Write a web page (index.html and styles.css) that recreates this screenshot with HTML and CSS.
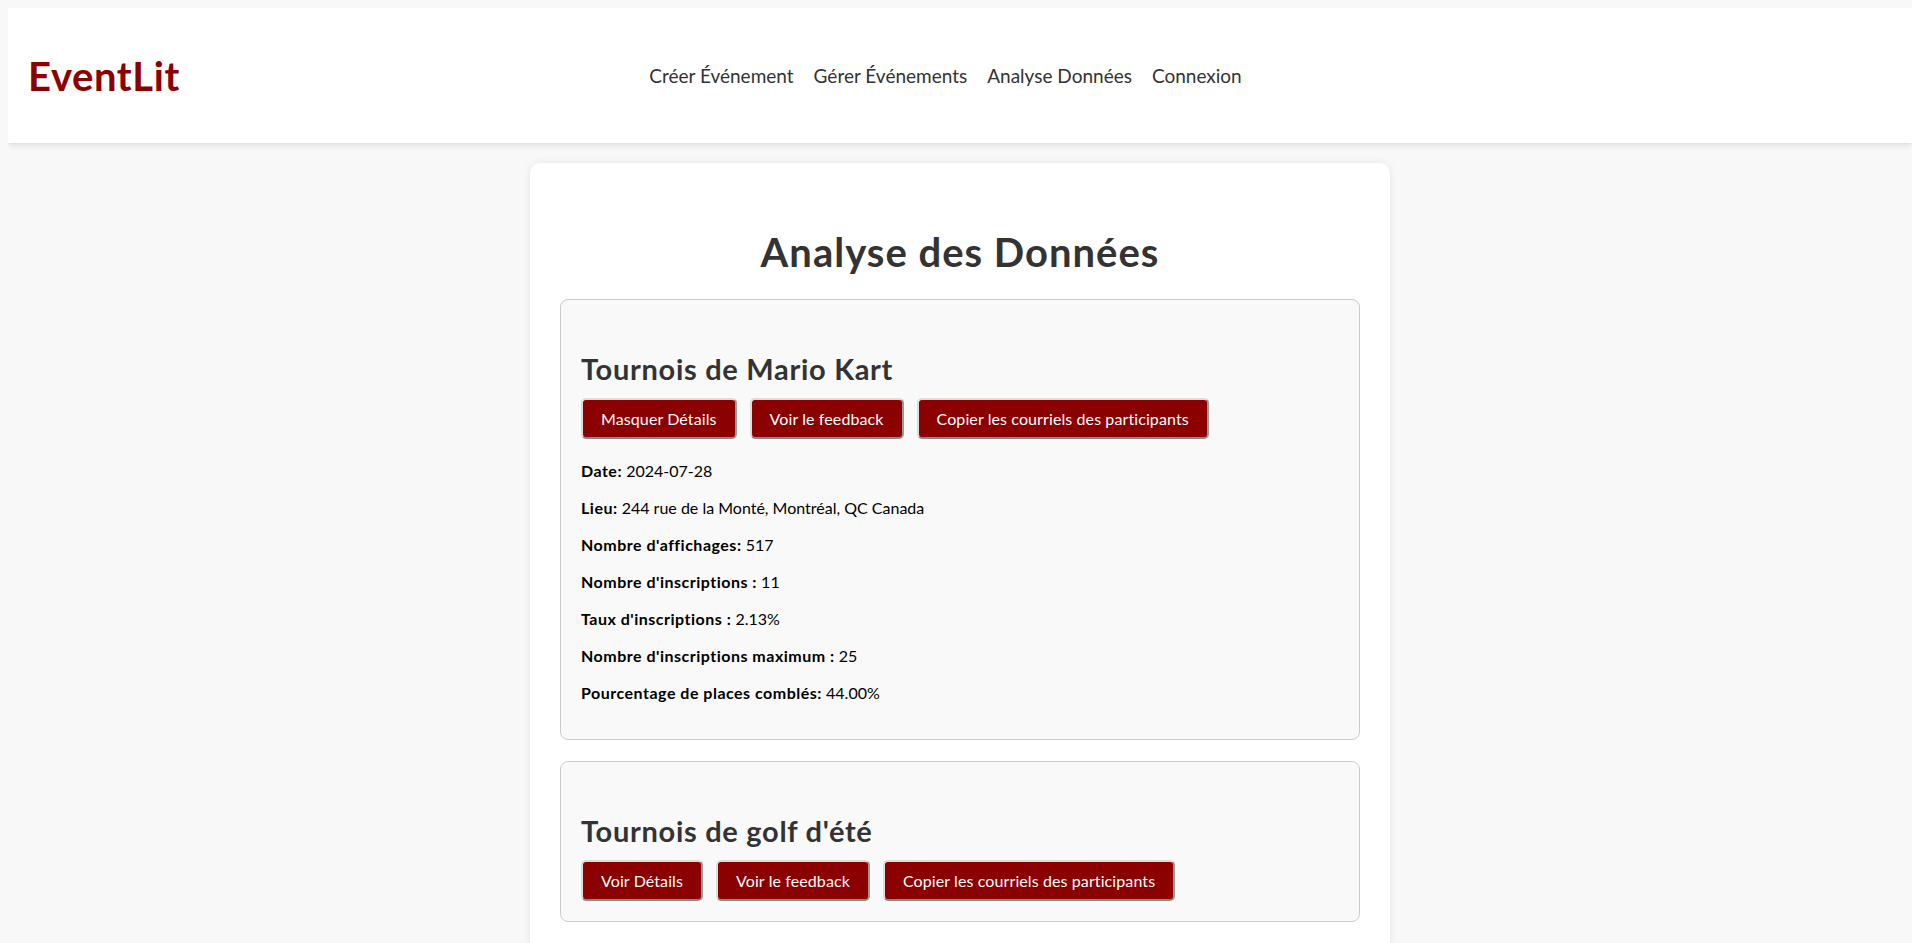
FILE: index.html
```html
<!DOCTYPE html>
<html lang="fr">
<head>
<meta charset="utf-8">
<title>EventLit - Analyse des Données</title>
<link rel="stylesheet" href="styles.css">
</head>
<body>
<header class="site-header">
  <div class="logo">EventLit</div>
  <nav class="main-nav">
    <a href="#">Créer Événement</a>
    <a href="#">Gérer Événements</a>
    <a href="#">Analyse Données</a>
    <a href="#">Connexion</a>
  </nav>
  <div class="header-spacer"></div>
</header>

<main class="container">
  <h1 class="page-title">Analyse des Données</h1>

  <section class="event-card">
    <h2 class="event-title">Tournois de Mario Kart</h2>
    <div class="actions">
      <button class="btn">Masquer Détails</button>
      <button class="btn">Voir le feedback</button>
      <button class="btn">Copier les courriels des participants</button>
    </div>
    <div class="details">
      <p><strong>Date:</strong> 2024-07-28</p>
      <p><strong>Lieu:</strong> 244 rue de la Monté, Montréal, QC Canada</p>
      <p><strong>Nombre d'affichages:</strong> 517</p>
      <p><strong>Nombre d'inscriptions :</strong> 11</p>
      <p><strong>Taux d'inscriptions :</strong> 2.13%</p>
      <p><strong>Nombre d'inscriptions maximum :</strong> 25</p>
      <p><strong>Pourcentage de places comblés:</strong> 44.00%</p>
    </div>
  </section>

  <section class="event-card">
    <h2 class="event-title">Tournois de golf d'été</h2>
    <div class="actions">
      <button class="btn">Voir Détails</button>
      <button class="btn">Voir le feedback</button>
      <button class="btn">Copier les courriels des participants</button>
    </div>
  </section>

  <section class="event-card">
    <h2 class="event-title">Soirée de jeux de société</h2>
    <div class="actions">
      <button class="btn">Voir Détails</button>
      <button class="btn">Voir le feedback</button>
      <button class="btn">Copier les courriels des participants</button>
    </div>
  </section>
</main>
</body>
</html>
```

FILE: styles.css
```css
html, body {
  background: #f8f8f8;
}

body {
  margin: 8px 0 0 8px;
  font-family: Lato, "Noto Sans", sans-serif;
  color: #000;
}

.site-header {
  display: grid;
  grid-template-columns: 1fr auto 1fr;
  align-items: center;
  height: 135px;
  padding: 0 20px;
  background: #fff;
  box-shadow: 0 2px 6px rgba(0, 0, 0, 0.12);
}

.logo {
  font-size: 40px;
  font-weight: 700;
  color: #8b0000;
  line-height: 48px;
  letter-spacing: 0.6px;
}

.main-nav {
  display: flex;
  margin-right: 29px;
}

.main-nav a {
  margin: 0 10px;
  font-size: 19px;
  color: #333;
  text-decoration: none;
}

.container {
  width: 800px;
  margin: 20px auto 0;
  padding: 30px;
  background: #fff;
  border-radius: 10px;
  box-shadow: 0 0 10px rgba(0, 0, 0, 0.08);
}

.page-title {
  margin: 36px 0 23px;
  font-size: 40px;
  line-height: 47px;
  font-weight: 700;
  color: #333;
  text-align: center;
  letter-spacing: 1px;
}

.event-card {
  margin-bottom: 21px;
  padding: 20px;
  background: #f9f9f9;
  border: 1px solid #ccc;
  border-radius: 8px;
}

.event-title {
  margin: 31px 0 12px;
  font-size: 29px;
  line-height: 35px;
  font-weight: 700;
  color: #333;
  letter-spacing: 0.7px;
}

.actions {
  display: flex;
  gap: 13px;
}

.btn {
  padding: 8px 18px;
  font-family: Lato, "Noto Sans", sans-serif;
  font-size: 16px;
  line-height: 21px;
  letter-spacing: 0.1px;
  color: #fff;
  background: #8b0000;
  border: 2px solid;
  border-color: #dcdcdc #9a9a9a #8a8a8a #dcdcdc;
  border-radius: 5px;
  cursor: pointer;
}

.details {
  padding-top: 5px;
}

.details p {
  margin: 16px 0;
  font-size: 16px;
  line-height: 21px;
}

.details strong {
  letter-spacing: 0.5px;
}
```
